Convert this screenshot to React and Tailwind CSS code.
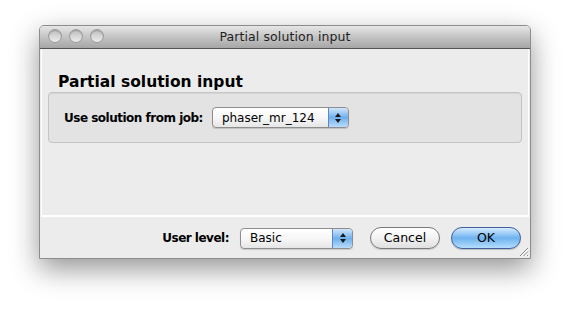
import React from 'react';

const font = { fontFamily: '"DejaVu Sans", "Liberation Sans", sans-serif' };

const Stepper = () => (
  <div className="w-[20px] self-stretch flex flex-col items-center justify-center gap-[2px] rounded-r-[4px] border-l border-[#5f86c4] bg-gradient-to-b from-[#cfe6fb] via-[#6fb0ec] to-[#b9dcfb]">
    <svg width="6" height="4" viewBox="0 0 6 4"><path d="M3 0L6 4H0z" fill="#1a1a1a" /></svg>
    <svg width="6" height="4" viewBox="0 0 6 4"><path d="M0 0h6L3 4z" fill="#1a1a1a" /></svg>
  </div>
);

const Select = ({ value, className = '' }) => (
  <div className={`h-[21px] flex items-stretch rounded-[4px] border border-[#8e8e8e] bg-gradient-to-b from-white via-[#f7f7f7] to-[#e6e6e6] shadow-[0_1px_1px_rgba(0,0,0,0.15)] ${className}`}>
    <div className="flex-1 flex items-center pl-[9px] text-[12px] text-black">{value}</div>
    <Stepper />
  </div>
);

const Dot = () => (
  <div className="w-[14px] h-[14px] rounded-full border border-[#9c9c9c] bg-gradient-to-b from-[#bdbdbd] via-[#d6d6d6] to-[#ececec] shadow-[inset_0_1px_1px_rgba(0,0,0,0.2)]" />
);

const App = () => {
  return (
    <div className="w-[571px] h-[313px] bg-white pt-[25px] pl-[39px]" style={font}>
      <div className="w-[492px] h-[234px] flex flex-col rounded-t-[5px] border border-[#8d8d8d] bg-[#ececec] shadow-[0_10px_28px_rgba(0,0,0,0.42)] overflow-hidden">
        <div className="relative h-[23px] shrink-0 flex items-center justify-center border-b border-[#545454] bg-gradient-to-b from-[#e6e6e6] via-[#c4c4c4] to-[#a6a6a6]">
          <div className="absolute left-[8px] top-[3px] flex gap-[7px]">
            <Dot />
            <Dot />
            <Dot />
          </div>
          <span className="text-[12.5px] text-[#1e1e1e] tracking-[0.1px]">Partial solution input</span>
        </div>

        <div className="flex-1 flex flex-col mx-[1px] border-l border-r border-b-2 border-white px-[6px] pt-[23px]">
          <h1 className="pl-[10px] text-[15.5px] font-bold text-black leading-[20px]">Partial solution input</h1>
          <div className="h-[51px] flex items-center gap-[9px] pl-[15px] rounded-[4px] border border-[#c4c4c4] bg-[#e3e3e3] shadow-[inset_0_1px_1px_rgba(0,0,0,0.06)]">
            <span className="text-[12px] tracking-[-0.5px] font-bold text-black">Use solution from job:</span>
            <Select value="phaser_mr_124" className="w-[137px]" />
          </div>
        </div>

        <div className="relative h-[41px] shrink-0 flex items-center justify-end pr-[9px] pt-[1px]">
          <span className="text-[12px] tracking-[-0.5px] font-bold text-black mr-[11px]">User level:</span>
          <Select value="Basic" className="w-[113px] mr-[17px]" />
          <button className="w-[70px] h-[22px] rounded-full border border-[#7a7a7a] bg-gradient-to-b from-white via-[#f2f2f2] to-[#e0e0e0] text-[12.5px] text-black shadow-[0_1px_1px_rgba(0,0,0,0.15)] mr-[11px]">Cancel</button>
          <button className="w-[70px] h-[22px] rounded-full border border-[#3f5f9e] bg-gradient-to-b from-[#d6ebfd] via-[#6db2ef] to-[#b5defd] text-[12.5px] text-black shadow-[0_1px_1px_rgba(0,0,0,0.2)]">OK</button>
          <svg className="absolute right-[1px] bottom-[1px]" width="11" height="11" viewBox="0 0 11 11">
            <path d="M10 2L2 10M10 5.5L5.5 10M10 9L9 10" stroke="#8a8a8a" strokeWidth="1" />
            <path d="M10.5 3L3 10.5M10.5 6.5L6.5 10.5" stroke="#ffffff" strokeWidth="0.8" />
          </svg>
        </div>
      </div>
    </div>
  );
};

export default App;
